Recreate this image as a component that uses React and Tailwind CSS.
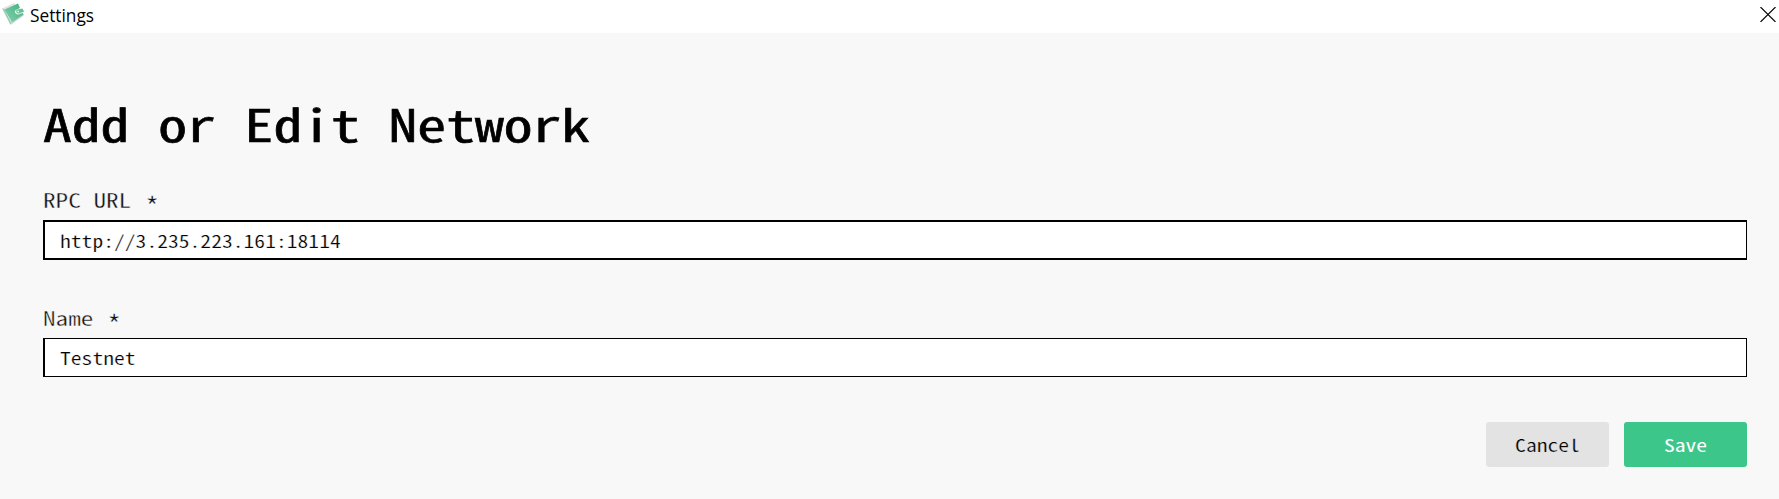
const mono = "font-['Noto_Sans_Mono_CJK_SC','Source_Code_Pro','DejaVu_Sans_Mono',monospace]";

function WalletIcon() {
  return (
    <svg width="26" height="28" viewBox="0 0 26 28" className="shrink-0" aria-hidden="true">
      <defs>
        <linearGradient id="leather" x1="0" y1="1" x2="1" y2="0">
          <stop offset="0" stopColor="#85d2ae" />
          <stop offset="1" stopColor="#43b080" />
        </linearGradient>
      </defs>
      <path d="M2 8.500 L14 3 L16 6 L5 12 Z" fill="#dfe5e2" />
      <path d="M2 8.500 L10.500 25 L24 15.500 L23 13.500 L11 22 L4 9 Z" fill="#d3dad7" />
      <path d="M2.500 8.500 L4.500 9.500 L11.500 23.500 L10.200 24 Z" fill="#8fcfb0" />
      <path d="M4.500 9.500 L18 3.500 L20 8 L16 10 Q13.500 13 17.500 14 L22.500 12.300 L23.500 14.500 L12 22.500 Z" fill="url(#leather)" />
      <path d="M15.500 10.500 Q14.500 13.500 18 14.200 L24.500 12" fill="none" stroke="#e3f3eb" strokeWidth="0.800" />
      <path d="M16.500 9.800 L22.300 8.600 L24.200 11.500 L18 13.500 Q15.500 13 16.500 9.800 Z" fill="#64c199" />
      <circle cx="18.200" cy="11.500" r="0.900" fill="#dff3e9" />
    </svg>
  );
}

function Field({ label, value, labelClass, boxClass, inputClass }) {
  return (
    <label className="flex flex-col">
      <span className={`${mono} block h-[35px] origin-center translate-y-[0.5px] scale-y-[0.77] text-[25.2px] leading-[35px] whitespace-pre text-[#111] [-webkit-text-stroke:0.4px_#f8f8f8] ${labelClass}`}>
        {label} <span className="inline-block translate-x-[2px] translate-y-[7px] scale-x-110 scale-y-130 [-webkit-text-stroke:0.3px_#f8f8f8]">*</span>
      </span>
      <span className={`flex items-center border-black bg-white pl-[15px] ${boxClass}`}>
        <input
          className={`${mono} h-9 w-full origin-center scale-y-[0.79] bg-transparent text-[21.6px] text-black outline-none [-webkit-text-stroke:0.3px_white] ${inputClass}`}
          defaultValue={value}
          spellCheck={false}
        />
      </span>
    </label>
  );
}

export default function App() {
  return (
    <div className="flex h-[499px] w-full flex-col overflow-hidden bg-[#f8f8f8]">
      <header className="flex h-[33px] shrink-0 items-start justify-between bg-white">
        <div className="flex">
          <WalletIcon />
          <span className="ml-1 font-['Open_Sans',sans-serif] text-[17.3px] leading-[32px] text-black">Settings</span>
        </div>
        <button aria-label="Close" className="mt-[7px] mr-[3px]">
          <svg width="16" height="15" viewBox="0 0 16 15" className="block">
            <path d="M0.500 0 L15.500 15 M15.500 0 L0.500 15" stroke="#000" strokeWidth="1.100" />
          </svg>
        </button>
      </header>
      <main className="flex flex-col pr-8 pl-[43px]">
        <h1 className={`${mono} mt-[55px] h-[70px] origin-center scale-y-[0.77] text-[57.6px] leading-[70px] font-normal text-black [-webkit-text-stroke:0.8px_black]`}>Add or Edit Network</h1>
        <form className="flex flex-col" onSubmit={(e) => e.preventDefault()}>
          <Field label="RPC URL" value="http://3.235.223.161:18114" labelClass="mt-[24px] mb-[3px]" boxClass="h-10 border-y-2 border-r border-l-2" inputClass="" />
          <Field label="Name" value="Testnet" labelClass="mt-[40px] mb-[3px]" boxClass="h-[39px] border-y border-r border-l-2" inputClass="-translate-y-px" />
          <div className="mt-[45px] flex justify-end gap-[15px]">
            <button type="button" className={`${mono} h-[45px] w-[123px] rounded-[3px] bg-[#e3e3e3] text-[21.6px] leading-[43px] text-black [-webkit-text-stroke:0.3px_#e3e3e3]`}>
              <span className="block scale-y-[0.79]">Cancel</span>
            </button>
            <button type="submit" className={`${mono} h-[45px] w-[123px] rounded-[3px] bg-[#3cc68a] text-[21.6px] leading-[43px] text-white`}>
              <span className="block scale-y-[0.79]">Save</span>
            </button>
          </div>
        </form>
      </main>
    </div>
  );
}
